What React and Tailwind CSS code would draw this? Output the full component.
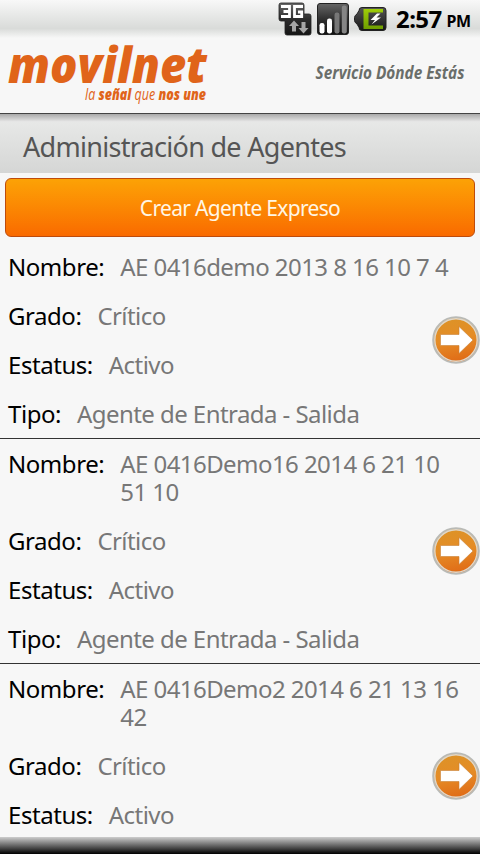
import React from 'react'

const agents = [
  { nombre: 'AE 0416demo 2013 8 16 10 7 4', grado: 'Crítico', estatus: 'Activo', tipo: 'Agente de Entrada - Salida' },
  { nombre: 'AE 0416Demo16 2014 6 21 10 51 10', grado: 'Crítico', estatus: 'Activo', tipo: 'Agente de Entrada - Salida' },
  { nombre: 'AE 0416Demo2 2014 6 21 13 16 42', grado: 'Crítico', estatus: 'Activo', tipo: 'Agente de Entrada - Salida' },
]

const NetworkIcon = () => (
  <svg width="34" height="34" viewBox="0 0 34 34">
    <defs>
      <linearGradient id="net" x1="0" y1="0" x2="0" y2="1">
        <stop offset="0" stopColor="#6a6a6a" />
        <stop offset="0.5" stopColor="#2c2c2c" />
        <stop offset="1" stopColor="#151515" />
      </linearGradient>
    </defs>
    <path d="M3 1h21q2 0 2 2v9h5q2 0 2 2v17q0 2-2 2H9q-2 0-2-2V19H3q-2 0-2-2V3q0-2 2-2z" fill="url(#net)" stroke="#222" strokeWidth="0.8" />
    <path d="M3 4.500h8.500v10H3M5.500 9.500h6" fill="none" stroke="#fff" strokeWidth="2.800" />
    <path d="M25 4.500h-8.500v10h7.200V10H20" fill="none" stroke="#fff" strokeWidth="2.800" />
    <path d="M16 18.500l5 5.500h-3v5.500h-4V24h-3z" fill="#a5a5a5" />
    <path d="M25.500 31.500l-5-5.500h3v-6h4v6h3z" fill="#a5a5a5" />
  </svg>
)

const SignalIcon = () => (
  <svg width="32" height="32" viewBox="0 0 32 32">
    <defs>
      <linearGradient id="sig" x1="0" y1="0" x2="0" y2="1">
        <stop offset="0" stopColor="#666" />
        <stop offset="0.5" stopColor="#303030" />
        <stop offset="1" stopColor="#111" />
      </linearGradient>
    </defs>
    <rect x="0.500" y="0.500" width="31" height="31" rx="2.500" fill="url(#sig)" stroke="#222" />
    <rect x="2.500" y="20" width="5" height="10.500" rx="2.200" fill="#fff" />
    <rect x="10" y="15.500" width="5" height="15" rx="2.200" fill="#fff" />
    <rect x="17.500" y="9.500" width="5" height="21" rx="2.200" fill="#777" />
    <rect x="24.800" y="2.500" width="5" height="28" rx="2.200" fill="#858585" />
  </svg>
)

const BatteryIcon = () => (
  <svg width="33" height="24" viewBox="0 0 33 24">
    <defs>
      <linearGradient id="bat" x1="0" y1="0" x2="0" y2="1">
        <stop offset="0" stopColor="#555" />
        <stop offset="1" stopColor="#151515" />
      </linearGradient>
      <linearGradient id="charge" x1="0" y1="0" x2="0" y2="1">
        <stop offset="0" stopColor="#9fce08" />
        <stop offset="1" stopColor="#6f9d00" />
      </linearGradient>
    </defs>
    <path d="M8 .5h21q3 0 3 3v17q0 3-3 3H8q-3 0-3-3L3 17Q.5 15.500 .5 13.500v-3Q.5 8.500 3 7l2-3.500q0-3 3-3z" fill="url(#bat)" stroke="#222" />
    <path d="M9.500 2H29v3.500H14.500v13H29V22H9.500z" fill="url(#charge)" />
    <path d="M23 6.500l-6.500 6.500h4.500l-3.500 4.500 9.500-7h-4.500l4-4z" fill="#fff" />
  </svg>
)

const Logo = () => (
  <svg width="216" height="75" viewBox="0 0 216 75" fill="#e0641a" fontFamily='"Open Sans", "Noto Sans", sans-serif'>
    <text x="8" y="44.500" fontSize="50" fontStyle="italic" fontWeight="800" textLength="199" lengthAdjust="spacingAndGlyphs">movilnet</text>
    <text x="85" y="61.500" fontSize="15.500" fontStyle="italic" fontWeight="400" textLength="121" lengthAdjust="spacingAndGlyphs">
      la <tspan fontWeight="800">señal</tspan> que <tspan fontWeight="800">nos une</tspan>
    </text>
  </svg>
)

const ArrowIcon = () => (
  <svg width="48" height="50" viewBox="0 0 48 50">
    <defs>
      <linearGradient id="ball" x1="0.3" y1="0" x2="0.5" y2="1">
        <stop offset="0" stopColor="#dc9328" />
        <stop offset="0.5" stopColor="#e58c26" />
        <stop offset="1" stopColor="#e06a16" />
      </linearGradient>
    </defs>
    <circle cx="24" cy="25" r="22.800" fill="url(#ball)" stroke="#b9bab6" strokeWidth="2" />
    <circle cx="24" cy="25" r="21.200" fill="none" stroke="#dfd8cc" strokeWidth="1.400" />
    <path d="M8.500 19.500H27v-8L41 25 27 38.500v-8H8.500z" fill="#fff" stroke="#c98235" strokeWidth="0.600" />
  </svg>
)

const Field = ({ label, value }) => (
  <div className="flex py-[10.5px] leading-7">
    <span className="shrink-0 tracking-[-0.45px] text-black">{label}:</span>
    <span className="ml-4 text-[#777]">{value}</span>
  </div>
)

const AgentItem = ({ agent }) => (
  <li className="flex shrink-0 items-center border-b border-[#333]">
    <div className="w-[464px] shrink-0 pl-2 -mr-8">
      <Field label="Nombre" value={agent.nombre} />
      <Field label="Grado" value={agent.grado} />
      <Field label="Estatus" value={agent.estatus} />
      <Field label="Tipo" value={agent.tipo} />
    </div>
    <ArrowIcon />
  </li>
)

const App = () => {
  return (
    <div className='relative flex h-[854px] w-[480px] flex-col overflow-hidden bg-[#f7f7f7] font-["Noto_Sans","Open_Sans",sans-serif]'>
      <div className="flex h-[38px] shrink-0 items-center bg-linear-to-b from-[#f8f8f8] via-[#d9dbd9] via-75% to-[#f7f7f7] pl-[278px] text-black">
        <NetworkIcon />
        <div className="ml-[5px]"><SignalIcon /></div>
        <div className="ml-[5px]"><BatteryIcon /></div>
        <span className="ml-[9px] text-2xl font-bold tracking-[-0.6px]">2:57</span>
        <span className="ml-[5px] mt-1 text-base font-bold tracking-[-0.5px]">PM</span>
      </div>

      <header className="flex h-[75px] shrink-0 justify-between">
        <Logo />
        <svg width="180" height="75" viewBox="0 0 180 75">
          <text x="15.500" y="41" fill="#6a6e6a" fontFamily='"Open Sans", sans-serif' fontSize="17" fontWeight="700" fontStyle="italic" textLength="149" lengthAdjust="spacingAndGlyphs">Servicio Dónde Estás</text>
        </svg>
      </header>

      <div className="flex h-[60px] shrink-0 flex-col border-t border-[#444]">
        <div className="h-2 shrink-0 bg-linear-to-b from-[#aaa] to-[#e9e9e9]"></div>
        <div className="flex grow items-center bg-linear-to-b from-[#e7e8e7] to-[#d5d6d5] pb-px pl-[23px]">
          <h1 className="text-[27px] leading-8 tracking-[-0.71px] text-[#555]">Administración de Agentes</h1>
        </div>
      </div>

      <button className="mx-[5px] mt-[5px] h-[59px] shrink-0 rounded-md border border-[#bd4b0c] bg-linear-to-b from-[#fca206] to-[#f96a00] pt-0.5 text-[21px] tracking-[-0.68px] text-[#fff6e5]">
        Crear Agente Expreso
      </button>

      <ul className="mt-[5px] flex flex-col text-2xl tracking-[-0.56px]">
        {agents.map((agent) => (
          <AgentItem key={agent.nombre} agent={agent} />
        ))}
      </ul>

      <div className="absolute inset-x-0 bottom-0 h-[17px] bg-linear-to-b/srgb from-[#cdcdcd] to-black"></div>
    </div>
  )
}

export default App
